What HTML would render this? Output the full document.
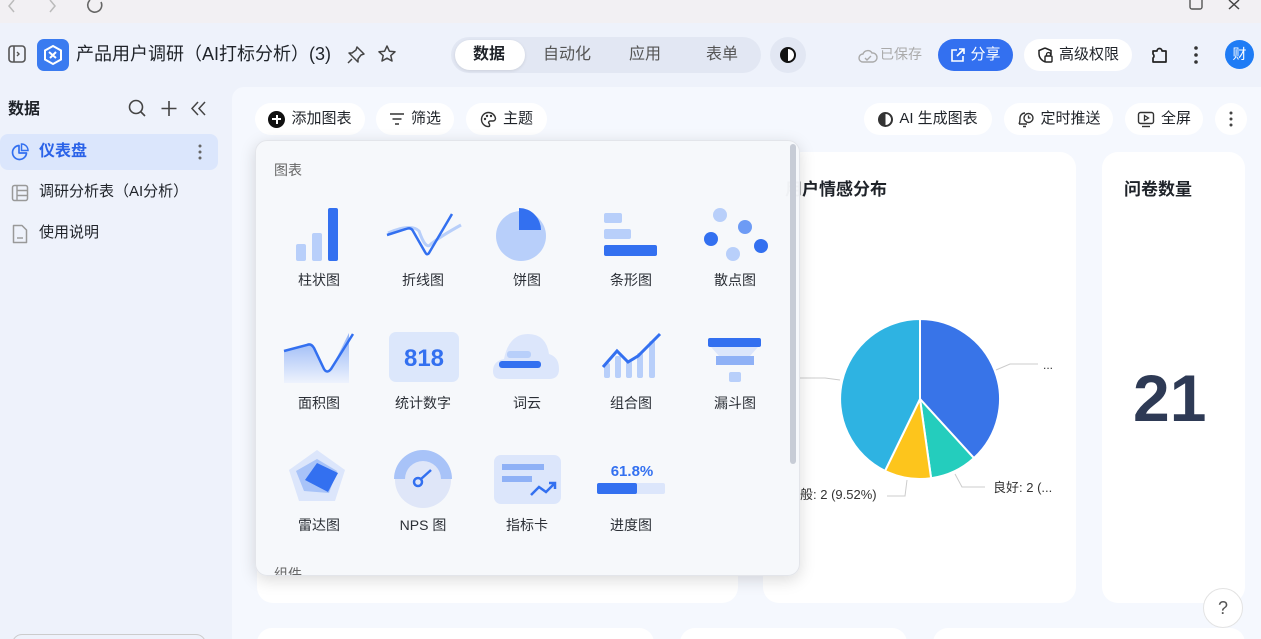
<!DOCTYPE html>
<html><head><meta charset="utf-8"><style>
*{box-sizing:border-box;margin:0;padding:0}
html,body{width:1261px;height:639px;overflow:hidden}
body{position:relative;background:#eef2fb;font-family:"Liberation Sans","Noto Sans CJK SC",sans-serif;color:#1f2329;line-height:1.2}
.a{position:absolute}
.pill{position:absolute;height:32px;border-radius:16px;background:#fff;display:flex;align-items:center;justify-content:center;font-size:15px;color:#1f2329;gap:6px}
.lbl{position:absolute;width:104px;text-align:center;font-size:14px;color:#2b2f36}
</style></head><body>
<!-- browser bar -->
<div class="a" style="left:0;top:0;width:1261px;height:23px;background:#f2f0f3"></div>
<svg class="a" style="left:0;top:0" width="110" height="14"><path d="M14 0 L9 6 L14 12" fill="none" stroke="#bbb" stroke-width="1.5"/><path d="M50 0 L55 6 L50 12" fill="none" stroke="#bbb" stroke-width="1.5"/><path d="M101 2 A7 7 0 1 1 90 0" fill="none" stroke="#666" stroke-width="1.6"/></svg>
<svg class="a" style="left:1185px;top:0" width="70" height="14"><rect x="5" y="-2" width="12" height="11" rx="2" fill="none" stroke="#555" stroke-width="1.4"/><path d="M44 0 L54 9 M54 0 L44 9" stroke="#444" stroke-width="1.5"/></svg>

<!-- header -->
<svg class="a" style="left:8px;top:45px" width="18" height="18"><rect x="1" y="1" width="16" height="16" rx="3" fill="none" stroke="#555" stroke-width="1.6"/><line x1="6" y1="1" x2="6" y2="17" stroke="#555" stroke-width="1.6"/><path d="M9 7 L11 9 L9 11" fill="none" stroke="#555" stroke-width="1.4"/></svg>
<div class="a" style="left:37px;top:39px;width:32px;height:32px;border-radius:7px;background:#3a7bf0"></div>
<svg class="a" style="left:41px;top:43px" width="24" height="24" viewBox="0 0 24 24"><path d="M12 3 L20 7.5 V16.5 L12 21 L4 16.5 V7.5 Z" fill="none" stroke="#fff" stroke-width="2"/><path d="M8 9 L15 15 M9 15 L15 9" stroke="#fff" stroke-width="2"/></svg>
<div class="a" style="left:76px;top:44px;font-size:18px;color:#1f2329">产品用户调研（AI打标分析）(3)</div>
<svg class="a" style="left:346px;top:45px" width="20" height="20"><path d="M11 2 L18 9 L15 10 L12 14 L12 17 L3 8 L6 8 L10 5 Z M6 14 L2 18" fill="none" stroke="#444" stroke-width="1.5" stroke-linejoin="round"/></svg>
<svg class="a" style="left:377px;top:44px" width="20" height="20"><path d="M10 2 L12.4 7.2 L18 7.8 L13.8 11.6 L15 17 L10 14.2 L5 17 L6.2 11.6 L2 7.8 L7.6 7.2 Z" fill="none" stroke="#444" stroke-width="1.5" stroke-linejoin="round"/></svg>
<div class="a" style="left:451px;top:37px;width:310px;height:36px;border-radius:18px;background:#e2e7f3"></div>
<div class="a" style="left:455px;top:40px;width:70px;height:30px;border-radius:15px;background:#fff;box-shadow:0 1px 3px rgba(0,0,0,.1)"></div>
<div class="a" style="left:473px;top:45px;font-size:16px;font-weight:bold">数据</div>
<div class="a" style="left:543px;top:45px;font-size:16px;color:#555">自动化</div>
<div class="a" style="left:629px;top:45px;font-size:16px;color:#555">应用</div>
<div class="a" style="left:706px;top:45px;font-size:16px;color:#555">表单</div>
<div class="a" style="left:770px;top:37px;width:36px;height:36px;border-radius:18px;background:#e2e7f3"></div>
<div class="a" style="left:780px;top:47px;width:16px;height:16px;border-radius:50%;border:2px solid #111;background:linear-gradient(90deg,#111 50%,#fff 50%)"></div>
<svg class="a" style="left:858px;top:48px" width="20" height="16"><path d="M5 14 A4 4 0 0 1 5 6 A5 5 0 0 1 14 5 A4.5 4.5 0 0 1 15 14 Z" fill="none" stroke="#aaa" stroke-width="1.4"/><path d="M7 10 L9 12 L13 8" fill="none" stroke="#aaa" stroke-width="1.4"/></svg>
<div class="a" style="left:880px;top:46px;font-size:14px;color:#aaa">已保存</div>
<div class="a" style="left:938px;top:39px;width:75px;height:32px;border-radius:16px;background:#3370f0;color:#fff;font-size:15px;display:flex;align-items:center;justify-content:center;gap:5px"><svg width="15" height="15"><path d="M7 2 H2 V13 H13 V8 M9 1 H14 V6 M14 1 L7 8" fill="none" stroke="#fff" stroke-width="1.6"/></svg>分享</div>
<div class="pill" style="left:1024px;top:39px;width:108px"><svg width="16" height="16"><path d="M8 1 L14 3.5 V8 M8 15 C4 13 2 10 2 7 V3.5 L8 1" fill="none" stroke="#222" stroke-width="1.5"/><rect x="8" y="9" width="7" height="6" rx="1" fill="none" stroke="#222" stroke-width="1.4"/><path d="M9.5 9 V7.5 A2 2 0 0 1 13.5 7.5 V9" fill="none" stroke="#222" stroke-width="1.3"/></svg>高级权限</div>
<svg class="a" style="left:1150px;top:45px" width="20" height="20"><path d="M3 6 H7 A2.5 2.5 0 0 1 12 6 H16 V17 H3 V13 A2.5 2.5 0 0 0 3 9 Z" fill="none" stroke="#222" stroke-width="1.7" stroke-linejoin="round"/></svg>
<svg class="a" style="left:1193px;top:45px" width="6" height="20"><circle cx="3" cy="3" r="1.8" fill="#333"/><circle cx="3" cy="10" r="1.8" fill="#333"/><circle cx="3" cy="17" r="1.8" fill="#333"/></svg>
<div class="a" style="left:1225px;top:40px;width:29px;height:29px;border-radius:50%;background:#1f7cf5;color:#fff;font-size:14px;text-align:center;line-height:29px">财</div>

<!-- sidebar -->
<div class="a" style="left:8px;top:100px;font-size:16px;font-weight:bold">数据</div>
<svg class="a" style="left:126px;top:98px" width="90" height="22"><circle cx="10" cy="9" r="6.5" fill="none" stroke="#444" stroke-width="1.6"/><path d="M15 14 L19 18" stroke="#444" stroke-width="1.6"/><path d="M43 3 V18 M35.5 10.5 H50.5" stroke="#444" stroke-width="1.6"/><path d="M72 4 L66 10.5 L72 17 M79 4 L73 10.5 L79 17" fill="none" stroke="#444" stroke-width="1.5"/></svg>
<div class="a" style="left:0;top:134px;width:218px;height:36px;border-radius:8px;background:#dbe6fc"></div>
<svg class="a" style="left:11px;top:143px" width="18" height="18"><path d="M8 2.5 A7 7 0 1 0 15.5 10 H8 Z" fill="none" stroke="#3370f0" stroke-width="1.7" stroke-linejoin="round"/><path d="M10.5 1 A6.5 6.5 0 0 1 17 7.5 H10.5 Z" fill="none" stroke="#3370f0" stroke-width="1.5"/></svg>
<div class="a" style="left:39px;top:142px;font-size:16px;font-weight:bold;color:#2a62e8">仪表盘</div>
<svg class="a" style="left:197px;top:143px" width="6" height="18"><circle cx="3" cy="3" r="1.5" fill="#666"/><circle cx="3" cy="9" r="1.5" fill="#666"/><circle cx="3" cy="15" r="1.5" fill="#666"/></svg>
<svg class="a" style="left:11px;top:184px" width="18" height="18"><rect x="1.5" y="1.5" width="15" height="15" rx="2" fill="none" stroke="#999" stroke-width="1.5"/><path d="M6 1.5 V16.5 M6 6.5 H16.5 M6 11.5 H16.5" stroke="#999" stroke-width="1.4"/></svg>
<div class="a" style="left:39px;top:183px;font-size:15px">调研分析表（AI分析）</div>
<svg class="a" style="left:12px;top:224px" width="16" height="20"><path d="M1.5 1.5 H10 L14.5 6 V18.5 H1.5 Z" fill="none" stroke="#999" stroke-width="1.5" stroke-linejoin="round"/><path d="M5 14 H11" stroke="#999" stroke-width="1.4"/></svg>
<div class="a" style="left:39px;top:224px;font-size:15px">使用说明</div>
<div class="a" style="left:12px;top:634px;width:194px;height:20px;border:1px solid #ccc;border-radius:10px"></div>

<!-- main -->
<div class="a" style="left:232px;top:87px;width:1040px;height:560px;background:#f5f8fe;border-top-left-radius:12px"></div>
<div class="pill" style="left:255px;top:103px;width:110px"><span style="display:inline-block;width:17px;height:17px;border-radius:50%;background:#111;position:relative"><span style="position:absolute;left:4px;top:7.5px;width:9px;height:2px;background:#fff"></span><span style="position:absolute;left:7.5px;top:4px;width:2px;height:9px;background:#fff"></span></span>添加图表</div>
<div class="pill" style="left:376px;top:103px;width:78px"><svg width="16" height="14"><path d="M1 2 H15 M3.5 7 H12.5 M6 12 H10" stroke="#333" stroke-width="1.5"/></svg>筛选</div>
<div class="pill" style="left:466px;top:103px;width:81px"><svg width="17" height="17"><path d="M8.5 1.5 A7 7 0 1 0 8.5 15.5 C10 15.5 10 13.5 9 12.5 C8 11.5 9 10 10.5 10 H13 A2.5 2.5 0 0 0 15.5 7.5 C15 4 12 1.5 8.5 1.5 Z" fill="none" stroke="#333" stroke-width="1.4"/><circle cx="5" cy="8" r="1.2" fill="#333"/><circle cx="7" cy="5" r="1.2" fill="#333"/><circle cx="11" cy="5" r="1.2" fill="#333"/></svg>主题</div>
<div class="pill" style="left:864px;top:103px;width:128px"><span style="display:inline-block;width:15px;height:15px;border-radius:50%;border:2px solid #333;background:linear-gradient(90deg,#333 50%,#fff 50%)"></span>AI 生成图表</div>
<div class="pill" style="left:1004px;top:103px;width:109px"><svg width="18" height="18"><path d="M3 14 C4 12 4 10 4 8 A5 5 0 0 1 9 3 M3 14 H11 M7 16.5 H10" fill="none" stroke="#333" stroke-width="1.4"/><circle cx="12.5" cy="8" r="4.5" fill="none" stroke="#333" stroke-width="1.4"/><path d="M12.5 5.5 V8 H14.5" fill="none" stroke="#333" stroke-width="1.3"/></svg>定时推送</div>
<div class="pill" style="left:1125px;top:103px;width:78px"><svg width="18" height="17"><rect x="1.5" y="1.5" width="15" height="11" rx="2" fill="none" stroke="#333" stroke-width="1.4"/><path d="M7.5 4.5 L11.5 7 L7.5 9.5 Z" fill="none" stroke="#333" stroke-width="1.3"/><path d="M5 15.5 H13" stroke="#333" stroke-width="1.4"/></svg>全屏</div>
<div class="pill" style="left:1215px;top:103px;width:32px"><svg width="6" height="18"><circle cx="3" cy="3" r="1.5" fill="#444"/><circle cx="3" cy="9" r="1.5" fill="#444"/><circle cx="3" cy="15" r="1.5" fill="#444"/></svg></div>

<div class="a" style="left:257px;top:152px;width:481px;height:451px;border-radius:16px;background:#fff"></div>
<div class="a" style="left:763px;top:152px;width:313px;height:451px;border-radius:16px;background:#fff"></div>
<div class="a" style="left:1102px;top:152px;width:143px;height:451px;border-radius:16px;background:#fff"></div>
<div class="a" style="left:257px;top:628px;width:397px;height:30px;border-radius:16px;background:#fff"></div>
<div class="a" style="left:680px;top:628px;width:227px;height:30px;border-radius:16px;background:#fff"></div>
<div class="a" style="left:933px;top:628px;width:312px;height:30px;border-radius:16px;background:#fff"></div>

<div class="a" style="left:785px;top:180px;font-size:17px;font-weight:bold">用户情感分布</div>
<div class="a" style="left:1124px;top:180px;font-size:17px;font-weight:bold">问卷数量</div>
<div class="a" style="left:1133px;top:365px;font-size:66px;font-weight:bold;color:#2e3a55;line-height:1">21</div>
<svg class="a" style="left:760px;top:290px" width="320" height="230" viewBox="760 290 320 230">
<path d="M920 399 L920 319 A80 80 0 0 1 973.9 458.1 Z" fill="#3874e8" stroke="#fff" stroke-width="2"/>
<path d="M920 399 L973.9 458.1 A80 80 0 0 1 931.1 478.2 Z" fill="#24cdbd" stroke="#fff" stroke-width="2"/>
<path d="M920 399 L931.1 478.2 A80 80 0 0 1 885 470.9 Z" fill="#fdc51c" stroke="#fff" stroke-width="2"/>
<path d="M920 399 L885 470.9 A80 80 0 0 1 920 319 Z" fill="#2eb3e2" stroke="#fff" stroke-width="2"/>
<polyline points="996,370 1010,364 1038,364" fill="none" stroke="#ccc"/>
<polyline points="955,474 962,487 985,487" fill="none" stroke="#ccc"/>
<polyline points="907,480 905,496 887,496" fill="none" stroke="#ccc"/>
<polyline points="840,380 825,378 800,378" fill="none" stroke="#ccc"/>
<text x="1043" y="369" font-size="12" fill="#333">...</text>
<text x="993" y="492" font-size="13" fill="#333" font-family="Liberation Sans,Noto Sans CJK SC,sans-serif">良好: 2 (...</text>
<text x="800" y="499" font-size="13" fill="#333" font-family="Liberation Sans,Noto Sans CJK SC,sans-serif">般: 2 (9.52%)</text>
</svg>
<div class="a" style="left:1203px;top:588px;width:40px;height:40px;border-radius:50%;background:#fff;border:1px solid #e3e3e3;text-align:center;line-height:38px;font-size:18px;color:#555">?</div>

<!-- dropdown -->
<div class="a" style="left:255px;top:140px;width:545px;height:436px;border-radius:12px;background:rgba(246,248,251,.97);box-shadow:0 4px 16px rgba(0,0,0,.15);border:1px solid #e3e5ea;overflow:hidden">
<div class="a" style="left:534px;top:3px;width:6px;height:320px;border-radius:3px;background:#c7ccd6"></div>
<div class="a" style="left:18px;top:21px;font-size:14px;color:#666">图表</div>
<div class="a" style="left:18px;top:425px;font-size:14px;color:#666">组件</div>
<svg class="a" style="left:0;top:0" width="540" height="400" viewBox="255 140 540 400">
<rect x="295" y="243" width="10" height="17" rx="2" fill="#b8cffa"/><rect x="311" y="232" width="10" height="28" rx="2" fill="#b8cffa"/><rect x="327" y="207" width="10" height="53" rx="2" fill="#3370f0"/>
<path d="M387 232 Q410 222 418 230 Q425 250 430 243 Q440 235 460 224" fill="none" stroke="#b8cffa" stroke-width="3"/>
<path d="M386 234 L405 228 Q410 226 412 230 L424 251 Q426 255 428 252 L451 213" fill="none" stroke="#3370f0" stroke-width="2.5"/>
<circle cx="520" cy="235" r="25" fill="#b8cffa"/><path d="M518 207 A22 22 0 0 1 540 229 L518 229 Z" fill="#3370f0"/>
<rect x="603" y="212" width="18" height="10" rx="2" fill="#b8cffa"/><rect x="603" y="228" width="27" height="10" rx="2" fill="#b8cffa"/><rect x="603" y="244" width="53" height="11" rx="2" fill="#3370f0"/>
<circle cx="719" cy="214" r="7" fill="#b8cffa"/><circle cx="744" cy="226" r="7" fill="#6d9bf5"/><circle cx="710" cy="238" r="7" fill="#3370f0"/><circle cx="760" cy="245" r="7" fill="#3370f0"/><circle cx="732" cy="253" r="7" fill="#b8cffa"/>
<defs><linearGradient id="g" x1="0" y1="0" x2="0" y2="1"><stop offset="0" stop-color="#8fb1f6"/><stop offset="1" stop-color="#eef3fd"/></linearGradient></defs>
<path d="M283 350 L306 344 Q310 342 313 347 L323 368 Q326 373 330 368 L348 332 L348 382 L283 382 Z" fill="url(#g)"/>
<path d="M283 350 L306 344 Q310 342 313 347 L323 368 Q326 373 330 368 L352 333" fill="none" stroke="#3370f0" stroke-width="2.5"/>
<rect x="388" y="331" width="70" height="50" rx="7" fill="#dce7fb"/>
<text x="423" y="365" text-anchor="middle" font-size="24" font-weight="bold" fill="#3370f0" font-family="Liberation Sans,sans-serif">818</text>
<path d="M500 378 Q492 378 492 370 Q492 360 503 358 Q508 333 527 333 Q545 333 548 353 Q558 356 558 368 Q558 378 548 378 Z" fill="#dce6fb"/>
<rect x="506" y="350" width="24" height="7" rx="3" fill="#b8cffa"/><rect x="498" y="360" width="42" height="7" rx="3" fill="#3370f0"/>
<rect x="603" y="362" width="6" height="15" rx="2" fill="#b8cffa"/><rect x="614" y="355" width="6" height="22" rx="2" fill="#b8cffa"/><rect x="625" y="360" width="6" height="17" rx="2" fill="#b8cffa"/><rect x="636" y="352" width="6" height="25" rx="2" fill="#b8cffa"/><rect x="648" y="340" width="6" height="37" rx="2" fill="#b8cffa"/>
<path d="M602 366 L616 350 L627 361 L637 355 L659 333" fill="none" stroke="#3370f0" stroke-width="3"/>
<rect x="707" y="337" width="53" height="9" rx="2" fill="#3370f0"/><path d="M710 346 L757 346 L749 355 L718 355 Z" fill="#dce6fb"/><rect x="715" y="355" width="38" height="9" fill="#8fb1f6"/><rect x="728" y="371" width="12" height="10" rx="2" fill="#b8cffa"/>
<path d="M316 449 L344 469 L334 500 L298 500 L288 469 Z" fill="#dce6fb"/>
<path d="M316 458 L336 470 L328 492 L303 490 L295 470 Z" fill="#a8c3f8"/>
<path d="M316 462 L337 472 L327 491 L304 479 Z" fill="#3370f0"/>
<circle cx="422" cy="479" r="28" fill="#dfe6f8"/>
<path d="M393 478 A29 29 0 0 1 451 478 L440 478 A18 18 0 0 0 404 478 Z" fill="#a8c3f8"/>
<circle cx="417" cy="481" r="4" fill="none" stroke="#3370f0" stroke-width="2.5"/><line x1="420" y1="478" x2="430" y2="469" stroke="#3370f0" stroke-width="2.5"/>
<rect x="493" y="454" width="67" height="49" rx="7" fill="#dce6fb"/>
<rect x="501" y="463" width="42" height="6" fill="#8fb1f6"/><rect x="501" y="475" width="30" height="6" fill="#8fb1f6"/>
<path d="M530 494 L538 486 L545 491 L554 482 M548 482 L554 482 L554 488" fill="none" stroke="#3370f0" stroke-width="2.5"/>
<text x="631" y="475" text-anchor="middle" font-size="15" font-weight="bold" fill="#3370f0" font-family="Liberation Sans,sans-serif">61.8%</text>
<rect x="596" y="482" width="68" height="11" rx="2" fill="#dce6fb"/><rect x="596" y="482" width="40" height="11" rx="2" fill="#3370f0"/>
</svg>
<div class="lbl" style="left:11px;top:131px">柱状图</div>
<div class="lbl" style="left:115px;top:131px">折线图</div>
<div class="lbl" style="left:219px;top:131px">饼图</div>
<div class="lbl" style="left:323px;top:131px">条形图</div>
<div class="lbl" style="left:427px;top:131px">散点图</div>
<div class="lbl" style="left:11px;top:254px">面积图</div>
<div class="lbl" style="left:115px;top:254px">统计数字</div>
<div class="lbl" style="left:219px;top:254px">词云</div>
<div class="lbl" style="left:323px;top:254px">组合图</div>
<div class="lbl" style="left:427px;top:254px">漏斗图</div>
<div class="lbl" style="left:11px;top:376px">雷达图</div>
<div class="lbl" style="left:115px;top:376px">NPS 图</div>
<div class="lbl" style="left:219px;top:376px">指标卡</div>
<div class="lbl" style="left:323px;top:376px">进度图</div>
</div>
</body></html>
